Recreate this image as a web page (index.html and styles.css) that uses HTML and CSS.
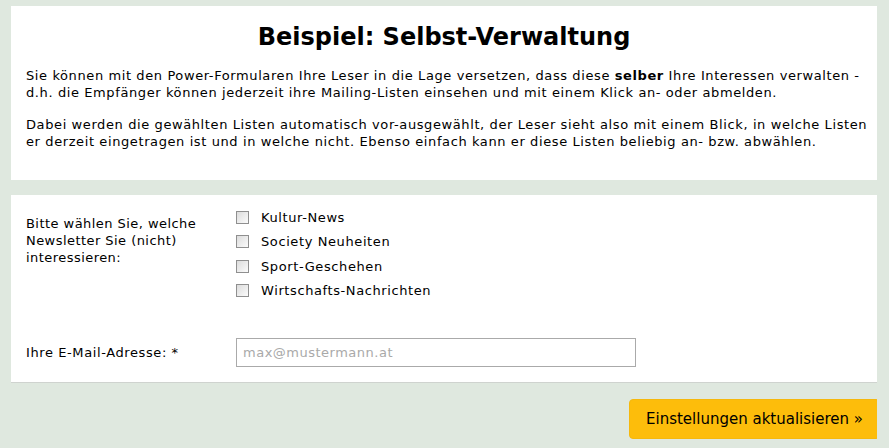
FILE: index.html
```html
<!DOCTYPE html>
<html lang="de">
<head>
  <meta charset="UTF-8">
  <title>Beispiel: Selbst-Verwaltung</title>
  <link rel="stylesheet" href="styles.css">
</head>
<body>

<div class="box intro">
  <h1>Beispiel: Selbst-Verwaltung</h1>
  <p>Sie können mit den Power-Formularen Ihre Leser in die Lage versetzen, dass diese <b>selber</b> Ihre Interessen verwalten -<br>d.h. die Empfänger können jederzeit ihre Mailing-Listen einsehen und mit einem Klick an- oder abmelden.</p>
  <p>Dabei werden die gewählten Listen automatisch vor-ausgewählt, der Leser sieht also mit einem Blick, in welche Listen<br>er derzeit eingetragen ist und in welche nicht. Ebenso einfach kann er diese Listen beliebig an- bzw. abwählen.</p>
</div>

<form class="box formular">
  <div class="row">
    <div class="label">Bitte wählen Sie, welche Newsletter Sie (nicht) interessieren:</div>
    <div class="lists">
      <label class="check"><span class="cb"></span>Kultur-News</label>
      <label class="check"><span class="cb"></span>Society Neuheiten</label>
      <label class="check"><span class="cb"></span>Sport-Geschehen</label>
      <label class="check"><span class="cb"></span>Wirtschafts-Nachrichten</label>
    </div>
  </div>
  <div class="row email">
    <div class="label">Ihre E-Mail-Adresse: *</div>
    <input type="text" placeholder="max@mustermann.at">
  </div>
</form>

<div class="actions">
  <button type="button">Einstellungen aktualisieren »</button>
</div>

</body>
</html>
```

FILE: styles.css
```css
* {
  margin: 0;
  padding: 0;
  box-sizing: border-box;
}

body {
  background: #dfe8df;
  margin: 6px 12px 0 11px;
  font-family: "DejaVu Sans", Verdana, sans-serif;
  font-size: 13px;
  letter-spacing: 0.6px;
  color: #000;
  overflow: hidden;
}

.box {
  background: #fff;
}

.intro {
  height: 174px;
  padding: 14px 15px 0 15px;
}

.intro h1 {
  text-align: center;
  font-size: 24px;
  letter-spacing: 0;
  line-height: 34px;
  margin-bottom: 13px;
}

.intro p {
  line-height: 17px;
  margin-bottom: 15px;
  white-space: nowrap;
  letter-spacing: 0.6px;
}

.formular {
  margin-top: 15px;
  height: 188px;
  border-bottom: 1px solid #cfd3cf;
  padding: 10px 15px 0 15px;
}

.row {
  display: flex;
}

.label {
  width: 210px;
  line-height: 17px;
  padding-top: 10px;
  letter-spacing: 0.45px;
}

.lists {
  display: flex;
  flex-direction: column;
}

.check {
  display: flex;
  align-items: center;
  height: 24.5px;
}

.cb {
  width: 13px;
  height: 13px;
  border: 1px solid #8f8f8f;
  background: linear-gradient(135deg, #dcdcdc, #fbfbfb);
  margin-right: 12px;
}

.email {
  margin-top: 35px;
  align-items: center;
}

.email .label {
  padding-top: 0;
  letter-spacing: 0.6px;
}

.email input {
  width: 400px;
  height: 29px;
  border: 1px solid #aaa;
  padding: 0 6px;
  font-family: "DejaVu Sans", Verdana, sans-serif;
  font-size: 13px;
  letter-spacing: 0.5px;
}

.email input::placeholder {
  color: #a9a9a9;
}

.actions {
  display: flex;
  justify-content: flex-end;
  margin-top: 16px;
  margin-right: -3px;
}

button {
  width: 251px;
  height: 40px;
  background: #fdbd0b;
  border: 1px solid #f5b80d;
  border-radius: 4px;
  font-family: "DejaVu Sans", Verdana, sans-serif;
  font-size: 15px;
  letter-spacing: 0;
  color: #000;
}
```
